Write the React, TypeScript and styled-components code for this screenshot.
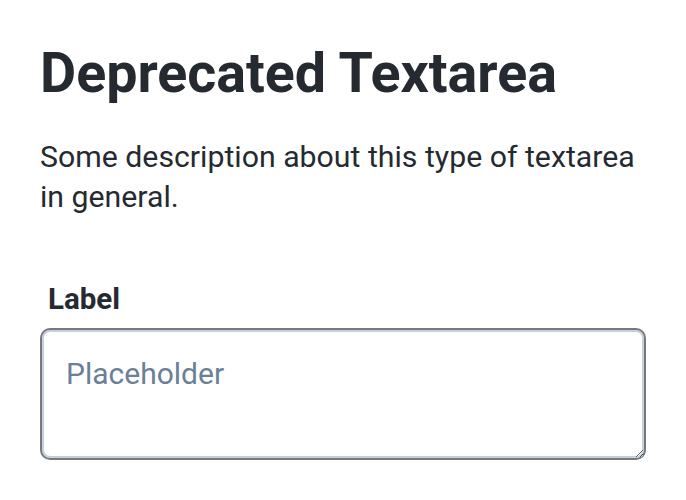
import React from "react";
import styled, { createGlobalStyle } from "styled-components";

const Global = createGlobalStyle`
  html, body { margin: 0; padding: 0; background: #ffffff; }
  body { font-family: Roboto, "Liberation Sans", sans-serif; color: #252a31; }
`;

const Page = styled.main`
  padding: 40px 40px 0 40px;
  display: flex;
  flex-direction: column;
`;

const Title = styled.h1`
  margin: 0;
  font-size: 55.6px;
  line-height: 67px;
  font-weight: 700;
  color: #252a31;
`;

const Description = styled.p`
  margin: 30px 0 0 0;
  font-size: 30.25px;
  line-height: 39.5px;
  font-weight: 400;
  color: #252a31;
`;

const Field = styled.div`
  margin-top: 65px;
  display: flex;
  flex-direction: column;
  gap: 11px;
`;

const Label = styled.label`
  padding-left: 8px;
  font-size: 29.5px;
  line-height: 36px;
  font-weight: 700;
  color: #252a31;
`;

const TextArea = styled.textarea`
  box-sizing: border-box;
  width: 606px;
  height: 132px;
  margin: 0;
  padding: 24px 24px;
  border: 2px solid #777a7d;
  border-radius: 10px;
  box-shadow: inset 0 0 0 2px #c5d0dc;
  font-family: Roboto, "Liberation Sans", sans-serif;
  font-size: 30px;
  line-height: 40px;
  color: #252a31;
  background: #ffffff;
  resize: both;
  outline: none;
  &::placeholder {
    color: #6a7f98;
    opacity: 1;
  }
`;

export default function App() {
  return (
    <>
      <Global />
      <Page>
        <Title>Deprecated Textarea</Title>
        <Description>Some description about this type of textarea in general.</Description>
        <Field>
          <Label htmlFor="ta">Label</Label>
          <TextArea id="ta" placeholder="Placeholder" />
        </Field>
      </Page>
    </>
  );
}
